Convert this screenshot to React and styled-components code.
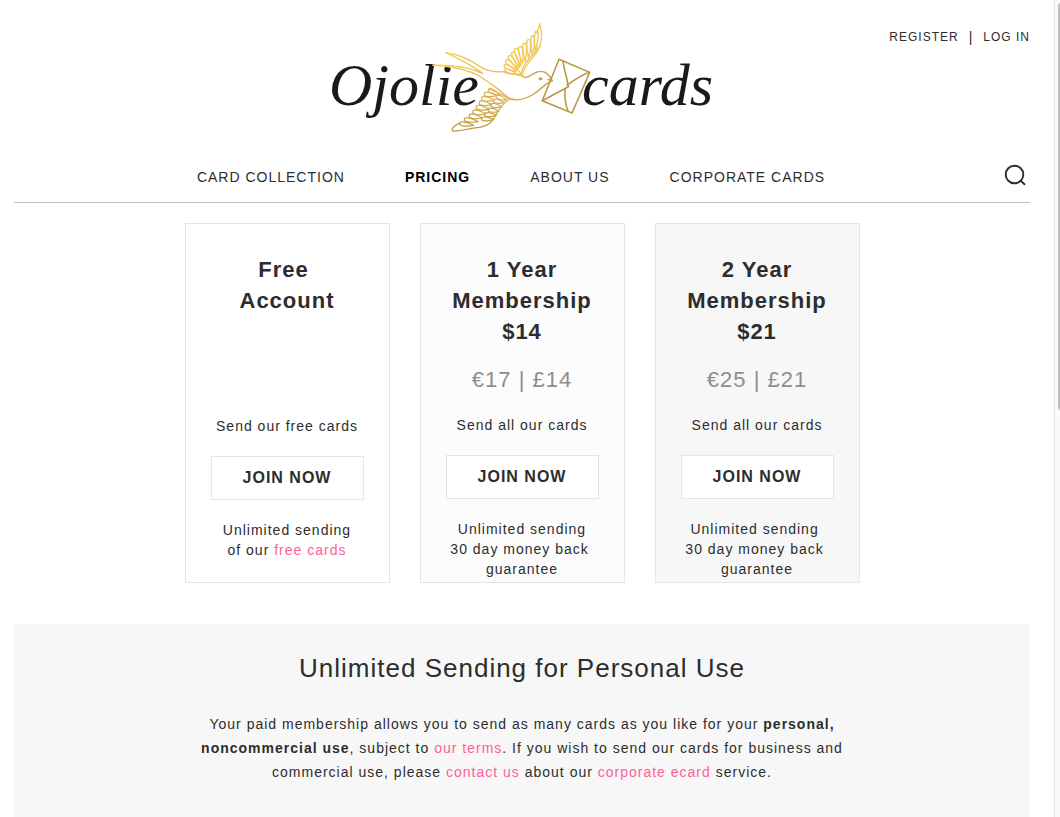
import React from "react";
import styled, { createGlobalStyle } from "styled-components";

const GlobalStyle = createGlobalStyle`
  * { box-sizing: border-box; }
  body {
    margin: 0;
    background: #fff;
    color: #2d2d2d;
    font-family: "Liberation Sans", Arial, sans-serif;
    font-size: 14px;
    letter-spacing: 1px;
  }
  h1, h2, p { margin: 0; }
`;

const Window = styled.div`
  display: flex;
  min-height: 100vh;
`;
const Page = styled.div`
  flex: 1;
  min-width: 0;
  display: flex;
  flex-direction: column;
  padding: 0 24px 0 14px;
`;
const ScrollTrack = styled.div`
  flex: none;
  width: 6px;
  padding: 3px 0 0 3px;
  background: #fafafa;
  border-left: 1px solid #e8e8e8;
`;
const ScrollThumb = styled.div`
  height: calc(50vh - 2px);
  border-radius: 3px 0 0 3px;
  background: #c1c1c1;
`;
const Header = styled.header`
  display: grid;
  grid-template-columns: 1fr auto 1fr;
  padding-top: 15px;
`;
const LogoLink = styled.a`
  grid-column: 2;
  display: block;
  height: 125px;
`;
const Wordmark = styled.text`
  fill: #1a1a1a;
  font: italic 60px "Liberation Serif", "Times New Roman", serif;
  letter-spacing: 0;
`;
const Account = styled.div`
  justify-self: end;
  display: flex;
  gap: 10px;
  padding-top: 14px;
  font-size: 12px;
  line-height: 16px;
`;
const AccountLink = styled.a`
  color: #2d2d2d;
  text-decoration: none;
`;
const Divider = styled.span`
  font-size: 14px;
`;
const NavBar = styled.div`
  display: grid;
  grid-template-columns: 1fr auto 1fr;
  align-items: center;
  height: 63px;
  padding-top: 8px;
  border-bottom: 1px solid #bfbfbf;
`;
const Nav = styled.nav`
  grid-column: 2;
  display: flex;
  gap: 60px;
  padding: 4px 22px 0 0;
`;
const NavLink = styled.a`
  color: ${(p) => (p.$active ? "#000" : "#2d2d2d")};
  font-weight: ${(p) => (p.$active ? "bold" : "normal")};
  text-decoration: none;
`;
const SearchButton = styled.button`
  justify-self: end;
  display: flex;
  padding: 0 4px;
  border: 0;
  background: none;
  color: #2d2d2d;
`;
const Plans = styled.section`
  display: flex;
  justify-content: center;
  gap: 30px;
  padding: 20px 0 41px;
`;
const Card = styled.article`
  display: flex;
  flex-direction: column;
  align-items: center;
  width: 205px;
  padding: 30px 16px 3px;
  border: 1px solid #e5e5e5;
  background: ${(p) => p.$fill};
  text-align: center;
`;
const CardTitle = styled.h2`
  min-height: ${(p) => (p.$priced ? "93px" : "142px")};
  font-size: 22px;
  line-height: 31px;
  white-space: pre;
`;
const Price = styled.p`
  margin-top: 17px;
  color: #8e8e8e;
  font-size: 22px;
  line-height: 31px;
`;
const CardText = styled.p`
  line-height: 20px;
`;
const Summary = styled(CardText)`
  margin: 20px 0;
`;
const JoinButton = styled.button`
  width: 153px;
  height: 44px;
  margin-bottom: 20px;
  border: 1px solid #e5e5e5;
  background: #fff;
  color: #2d2d2d;
  font: bold 16px "Liberation Sans", Arial, sans-serif;
  letter-spacing: 1px;
`;
const PinkLink = styled.a`
  color: #ff5f95;
  text-decoration: none;
`;
const Usage = styled.section`
  flex: 1;
  padding: 26px 24px 33px;
  background: #f7f7f7;
  text-align: center;
`;
const UsageTitle = styled.h1`
  font-size: 26px;
  font-weight: normal;
  line-height: 36px;
`;
const UsageText = styled.p`
  max-width: 680px;
  margin: 26px auto 0;
  line-height: 24px;
`;

// A feather from its root (x1, y1) to its rounded tip (x2, y2).
function feather([x1, y1, x2, y2, w]) {
  const dx = x2 - x1;
  const dy = y2 - y1;
  const len = Math.hypot(dx, dy);
  const nx = (-dy / len) * w;
  const ny = (dx / len) * w;
  const cx = x1 + dx * 0.55;
  const cy = y1 + dy * 0.55;
  const ex = x2 + dx * 0.06;
  const ey = y2 + dy * 0.06;
  return `M${x1} ${y1}C${cx + nx} ${cy + ny} ${ex + nx} ${ey + ny} ${x2} ${y2}C${ex - nx} ${ey - ny} ${cx - nx} ${cy - ny} ${x1} ${y1}`;
}

// Both wings are drawn on a grid three times as fine as the logo's.
const upperWing = [
  [84, 168, 47, 157, 8], [82, 160, 46, 142, 8], [84, 155, 51, 127, 8],
  [88, 152, 60, 114, 8], [92, 148, 71, 103, 8], [96, 144, 80, 92, 8],
  [101, 136, 93, 86, 8], [109, 130, 106, 76, 8], [119, 120, 119, 65, 8],
  [130, 112, 131, 53, 7], [139, 100, 143, 39, 7],
];
const lowerWing = [
  [160, 46, 125, 29, 9], [150, 46, 112, 42, 9], [178, 60, 148, 48, 8],
  [142, 60, 104, 55, 9], [172, 68, 140, 62, 8], [134, 74, 97, 68, 9],
  [164, 80, 132, 75, 8], [126, 88, 88, 81, 9], [156, 94, 124, 89, 8],
  [116, 102, 78, 95, 9], [148, 106, 114, 103, 8], [106, 114, 67, 107, 9],
  [140, 118, 104, 116, 8], [94, 125, 52, 118, 8], [80, 136, 38, 130, 8],
];

function Logo() {
  return (
    <svg width="396" height="125" viewBox="325 15 396 125" role="img" aria-label="Ojolie cards">
      <defs>
        <linearGradient id="lowerWingGold" gradientUnits="userSpaceOnUse" x1="150" y1="20" x2="140" y2="150">
          <stop offset="0" stopColor="#dfb850" />
          <stop offset="1" stopColor="#bf9a3c" />
        </linearGradient>
        <linearGradient id="bodyGold" gradientUnits="userSpaceOnUse" x1="440" y1="55" x2="550" y2="95">
          <stop offset="0" stopColor="#fbd263" />
          <stop offset="0.5" stopColor="#e3ba55" />
          <stop offset="1" stopColor="#c39f4a" />
        </linearGradient>
      </defs>
      <Wordmark x="330" y="105">Ojolie</Wordmark>
      <Wordmark x="583" y="105">cards</Wordmark>
      <g fill="none" stroke="url(#bodyGold)" strokeWidth="1.4" strokeLinecap="round" strokeLinejoin="round">
        <path d="M447 52.7C463 55 472 60 480 66C487 71 495 72.5 507 71.7" />
        <path d="M447 52.7C460 59 475 66 483.5 73.3C470 67 455 64.5 434 65.2" />
        <path d="M434 65.2C456 66 470 70 482 77C493 84 502 91 511 99.3" />
        <path d="M510 98.5C518 101 526 99.5 534 94.5C543 89 545 84 553.3 80.7" />
        <path d="M506 72.5L522.7 75.5L526 77.6C531 77.3 532.5 74 538 72C546 69.5 550 74.5 553.3 80.7L549 79.5" />
        <ellipse cx="541.5" cy="78.7" rx="1.4" ry="0.8" fill="#c4a03c" />
        <g transform="translate(490 18) scale(0.3333)" stroke="#f2c856" strokeWidth="4">
          {upperWing.map((f) => <path key={f.join()} d={feather(f)} />)}
          <path d="M143 45C148 38 150 28 152 17C162 50 160 78 143 104C130 124 108 134 98 176" />
          <path d="M148 88C134 116 106 124 96 168M84 154C92 158 94 164 96 174" />
        </g>
        <g transform="translate(448 80) scale(0.3333)" stroke="url(#lowerWingGold)" strokeWidth="3.6">
          {lowerWing.map((f) => <path key={f.join()} d={feather(f)} />)}
          <path d="M40 128C22 136 12 147 16 152C24 158 60 146 98 142C138 134 140 114 152 96C162 80 172 66 188 58" />
          <path d="M125 27C146 34 166 44 188 58" />
        </g>
        <g stroke="#bb9848" strokeWidth="1.6" strokeLinejoin="miter">
          <path d="M560 59.3L590.7 72.3L573 113L543.3 100.7Z" />
          <path d="M564 61C565 70 568 77 569.3 86.7L543.3 100.7" />
          <path d="M590 72.5C582 75 574 81 568 85" />
          <path d="M566 89C565.5 97 567 106 569 111" />
        </g>
      </g>
    </svg>
  );
}

const memberDetail = ["Unlimited sending", "30 day money back\u00a0", "guarantee"];
const plans = [
  { title: "Free\u00a0\nAccount", summary: "Send our free cards", fill: "#fff" },
  { title: "1 Year\nMembership\n$14", price: "€17 | £14", summary: "Send all our cards", fill: "#fcfcfc", detail: memberDetail },
  { title: "2 Year\nMembership\n$21", price: "€25 | £21", summary: "Send all our cards", fill: "#f7f7f7", detail: ["Unlimited sending\u00a0", ...memberDetail.slice(1)] },
];

export default function App() {
  return (
    <Window>
      <GlobalStyle />
      <Page>
        <Header>
          <LogoLink href="#home"><Logo /></LogoLink>
          <Account>
            <AccountLink href="#register">REGISTER</AccountLink>
            <Divider>|</Divider>
            <AccountLink href="#login">LOG IN</AccountLink>
          </Account>
        </Header>
        <NavBar>
          <Nav>
            <NavLink href="#cards">CARD COLLECTION</NavLink>
            <NavLink href="#pricing" $active>PRICING</NavLink>
            <NavLink href="#about">ABOUT US</NavLink>
            <NavLink href="#corporate">CORPORATE CARDS</NavLink>
          </Nav>
          <SearchButton aria-label="Search">
            <svg width="22" height="22" viewBox="0 0 22 22" fill="none" stroke="currentColor" strokeWidth="1.9" strokeLinecap="round">
              <circle cx="10.5" cy="10.5" r="8.8" /><path d="M16.7 16.7L20.5 20.2" />
            </svg>
          </SearchButton>
        </NavBar>
        <Plans>
          {plans.map((p) => (
            <Card key={p.title} $fill={p.fill}>
              <CardTitle $priced={!!p.price}>{p.title}</CardTitle>
              {p.price && <Price>{p.price}</Price>}
              <Summary>{p.summary}</Summary>
              <JoinButton>JOIN NOW</JoinButton>
              <CardText>
                {p.detail
                  ? p.detail.map((line) => <React.Fragment key={line}>{line}<br /></React.Fragment>)
                  : <>Unlimited sending<br />of our <PinkLink href="#free">free cards</PinkLink></>}
              </CardText>
            </Card>
          ))}
        </Plans>
        <Usage>
          <UsageTitle>Unlimited Sending for Personal Use</UsageTitle>
          <UsageText>
            Your paid membership allows you to send as many cards as you like for your <b>personal, noncommercial use</b>, subject to <PinkLink href="#terms">our terms</PinkLink>. If you wish to send our cards for business and commercial use, please <PinkLink href="#contact">contact us</PinkLink> about our <PinkLink href="#ecard">corporate ecard</PinkLink> service.
          </UsageText>
        </Usage>
      </Page>
      <ScrollTrack><ScrollThumb /></ScrollTrack>
    </Window>
  );
}
